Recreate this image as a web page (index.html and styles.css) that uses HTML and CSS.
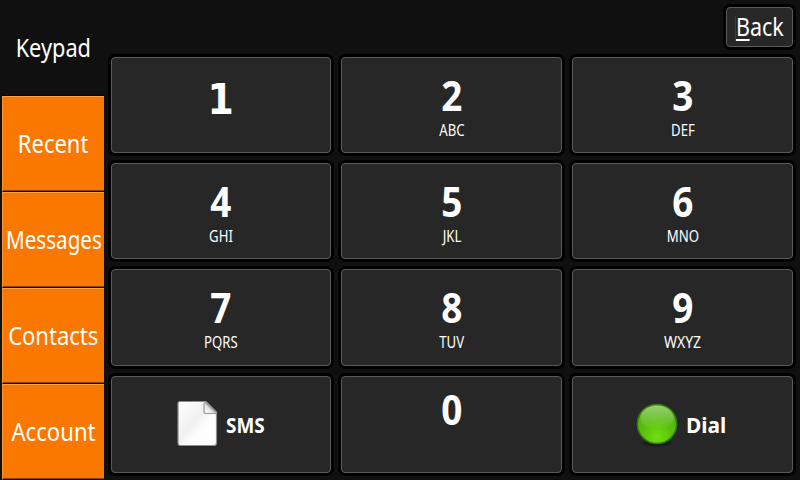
FILE: index.html
```html
<!DOCTYPE html>
<html lang="en">
<head>
<meta charset="utf-8">
<title>Keypad</title>
<link rel="stylesheet" href="styles.css">
</head>
<body>
<div class="app">
  <nav class="tabs">
    <div class="tab active"><span class="keypad">Keypad</span></div>
    <div class="tab"><span class="recent">Recent</span></div>
    <div class="tab"><span class="messages">Messages</span></div>
    <div class="tab"><span class="contacts">Contacts</span></div>
    <div class="tab"><span class="account">Account</span></div>
  </nav>
  <main class="panel">
    <header class="bar"><div class="key back"><span><u>B</u>ack</span></div></header>
    <section class="grid">
      <div class="key num one"><b>1</b></div>
      <div class="key num"><b>2</b><small>ABC</small></div>
      <div class="key num"><b>3</b><small>DEF</small></div>
      <div class="key num"><b>4</b><small>GHI</small></div>
      <div class="key num"><b>5</b><small>JKL</small></div>
      <div class="key num"><b>6</b><small>MNO</small></div>
      <div class="key num"><b>7</b><small>PQRS</small></div>
      <div class="key num"><b>8</b><small>TUV</small></div>
      <div class="key num"><b>9</b><small class="wide">WXYZ</small></div>
      <div class="key action">
        <svg class="icon" width="48" height="48" viewBox="0 0 48 48">
          <defs>
            <linearGradient id="paper" x1="0" y1="0" x2="1" y2="1"><stop offset="0" stop-color="#fff"/><stop offset=".45" stop-color="#f0f0f0"/><stop offset=".6" stop-color="#fcfcfc"/><stop offset="1" stop-color="#fff"/></linearGradient>
            <linearGradient id="fold" x1="0" y1="1" x2="1" y2="0"><stop offset="0" stop-color="#fff"/><stop offset=".4" stop-color="#e4e4e4"/><stop offset=".6" stop-color="#777"/></linearGradient>
          </defs>
          <path d="M7 1.500H33L43.500 12V43Q43.500 45.500 41 45.500H7.500Q5 45.500 5 43V3.500Q5 1.500 7 1.500Z" fill="url(#paper)" stroke="#8c8c88" stroke-width="1.200"/>
          <path d="M31 2L33 1.500L43.500 12V13.500H33.500Q31 13.500 31 11Z" fill="url(#fold)"/>
          <path d="M31 3V11.500Q31 13.500 33 13.500H43" fill="none" stroke="#999" stroke-width="1.200"/>
        </svg>
        <span class="sms">SMS</span>
      </div>
      <div class="key num zero"><b>0</b></div>
      <div class="key action call">
        <svg class="icon" width="48" height="48" viewBox="0 0 48 48">
          <defs>
            <radialGradient id="ball" cx=".5" cy=".82" r=".8"><stop offset="0" stop-color="#72e010"/><stop offset=".5" stop-color="#56c00a"/><stop offset="1" stop-color="#55ad18"/></radialGradient>
            <linearGradient id="shine" x1="0" y1="0" x2="0" y2="1"><stop offset="0" stop-color="#fff" stop-opacity=".38"/><stop offset="1" stop-color="#fff" stop-opacity="0"/></linearGradient>
            <radialGradient id="shadow"><stop offset=".5" stop-color="#111" stop-opacity=".7"/><stop offset="1" stop-color="#111" stop-opacity="0"/></radialGradient>
          </defs>
          <ellipse cx="24" cy="43" rx="18" ry="4" fill="url(#shadow)"/>
          <circle cx="24" cy="24" r="19.600" fill="url(#ball)" stroke="#347b0c" stroke-width="1.500"/>
          <ellipse cx="24" cy="17.500" rx="16.500" ry="12" fill="url(#shine)"/>
        </svg>
        <span class="dial">Dial</span>
      </div>
    </section>
  </main>
</div>
</body>
</html>
```
FILE: styles.css
```css
* { box-sizing: border-box; }
body { margin: 0; background: #101010; color: #fff; font-family: "Noto Sans", sans-serif; }
.app { display: flex; width: 800px; height: 480px; overflow: hidden; background: #101010; }
.tabs { display: flex; flex-direction: column; width: 104px; padding-left: 2px; }
.tab { height: 96px; display: flex; align-items: center; justify-content: center; padding-bottom: 2px; font-size: 25px; line-height: 34px; background: #fa7800; border-top: 1px solid #ffa04c; border-left: 1px solid #ff9333; border-bottom: 1px solid #000; box-shadow: inset 0 -1px #8a4300; white-space: nowrap; }
.tab.active { background: #101010; border-color: #101010 #101010 #000; box-shadow: none; }
.tab span, .key span, .key b, .key small { display: block; flex: none; transform: scaleX(var(--s, .84)); }
.tab .keypad { --s: .87; }
.tab .recent { --s: .88; }
.tab .messages { --s: .825; padding-left: 2px; }
.tab .contacts { --s: .88; }
.tab .account { --s: .885; }
.panel { width: 696px; padding: 7px; }
.bar { display: flex; justify-content: flex-end; height: 50px; }
.key { background: #272727; border: 1px solid #5a5a5a; border-radius: 4px; box-shadow: 0 0 0 3px #000; }
.back { width: 67px; height: 40px; display: flex; align-items: center; justify-content: center; padding-bottom: 2px; font-size: 25px; --s: .86; }
.back u { text-decoration: none; box-shadow: 0 2px #fff; display: inline-block; line-height: 25px; }
.grid { display: grid; grid-template-columns: 220px 221px 221px; grid-template-rows: 96px 96px 97px 97px; gap: 10px; }
.num { display: flex; flex-direction: column; align-items: center; padding-top: 12px; }
.num b { font-size: 41px; line-height: 50px; --s: .9; }
.num small { font-size: 15.5px; line-height: 20px; --s: .85; }
.num .wide { --s: .9; }
.one b { font-family: "DejaVu Sans", sans-serif; font-size: 42px; padding-top: 5px; }
.zero { padding-top: 7px; }
.action { display: flex; align-items: center; padding: 0 0 2px 61px; font-size: 22px; font-weight: 700; }
.action.call { padding-left: 60px; }
.action span { transform-origin: left center; margin-left: 5px; padding-top: 1px; --s: .86; }
.action .dial { --s: .95; }
```
